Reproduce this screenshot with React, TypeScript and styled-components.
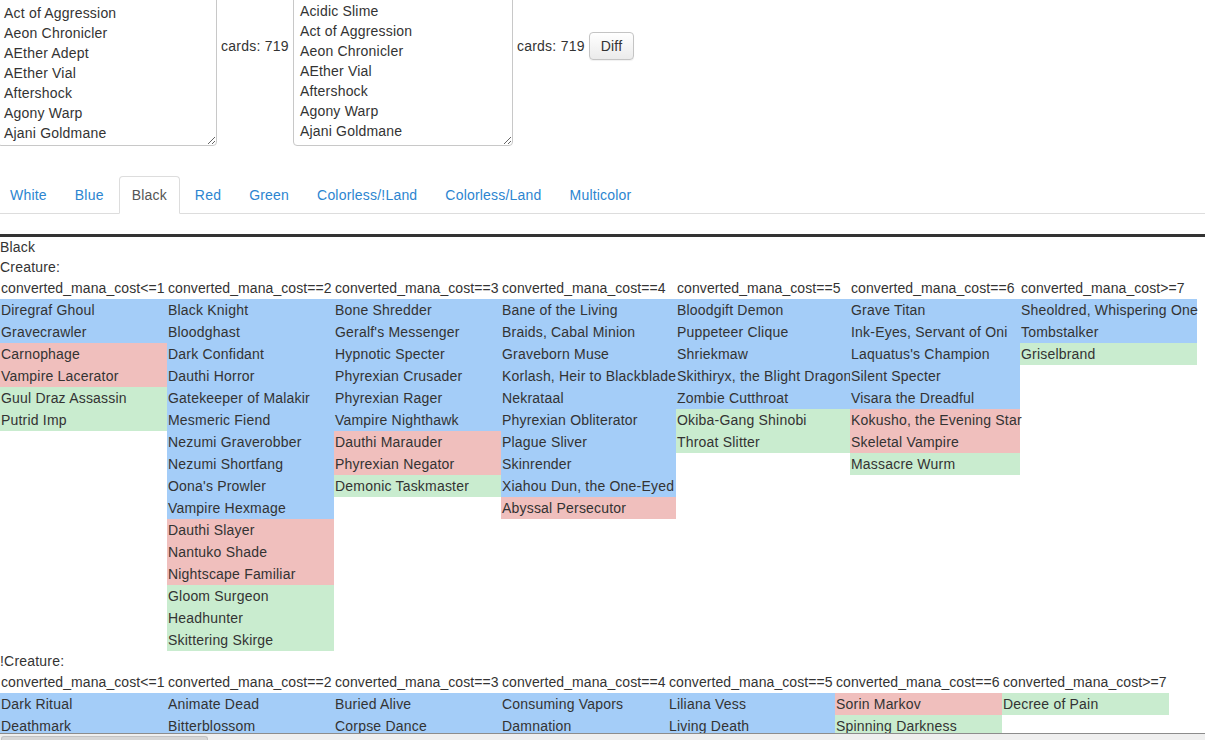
import React from 'react';
import styled, { createGlobalStyle } from 'styled-components';

const GlobalStyle = createGlobalStyle`
  html, body { margin: 0; padding: 0; overflow: hidden; background: #fff; }
  body {
    font-family: "Liberation Sans", Arial, Helvetica, sans-serif;
    font-size: 14px;
    line-height: 20px;
    color: #333;
    letter-spacing: 0.2px;
  }
`;

type Tone = 'b' | 'r' | 'g';

const toneBg: Record<Tone, string> = {
  b: '#a4cdf8',
  r: '#f0bfbd',
  g: '#c9eccf',
};

const Page = styled.div`
  width: 1205px;
`;

const TopRow = styled.div`
  display: flex;
  align-items: center;
  gap: 4px;
  height: 201px;
  margin: -55px 0 0 -3px;
`;

const CardArea = styled.textarea<{ $padTop: number }>`
  width: 220px;
  height: 201px;
  box-sizing: border-box;
  border: 1px solid #c8c8c8;
  border-radius: 4px;
  padding: ${(p) => p.$padTop}px 6px 0;
  font-family: inherit;
  font-size: 14px;
  line-height: 20px;
  letter-spacing: 0.2px;
  color: #333;
  background: #fff;
  resize: both;
  overflow: hidden;
  outline: none;
  flex: none;
`;

const CardsLabel = styled.span`
  white-space: nowrap;
  letter-spacing: 0.25px;
`;

const DiffButton = styled.button`
  font-family: inherit;
  font-size: 14px;
  line-height: 20px;
  letter-spacing: 0.2px;
  padding: 3px 11px;
  border: 1px solid #c4c4c4;
  border-radius: 4px;
  background: linear-gradient(#ffffff, #ebebeb);
  color: #333;
  box-shadow: 0 1px 1px rgba(0, 0, 0, 0.06);
`;

const Nav = styled.ul`
  display: flex;
  list-style: none;
  margin: 30px 0 0 -3px;
  padding: 0;
  border-bottom: 1px solid #ddd;
`;

const NavItem = styled.li`
  margin: 0 2px -1px 0;
`;

const NavLink = styled.a<{ $active?: boolean }>`
  display: block;
  padding: 8px 12px;
  line-height: 20px;
  border: 1px solid ${(p) => (p.$active ? '#ddd' : 'transparent')};
  border-bottom-color: transparent;
  border-radius: 4px 4px 0 0;
  background: ${(p) => (p.$active ? '#fff' : 'transparent')};
  color: ${(p) => (p.$active ? '#555' : '#2c85d0')};
  text-decoration: none;
  cursor: pointer;
`;

const Rule = styled.div`
  height: 3px;
  background: #333;
  margin-top: 20px;
`;

const Caption = styled.div`
  line-height: 20px;
`;

const Board = styled.div<{ $cols: string }>`
  display: grid;
  grid-template-columns: ${(p) => p.$cols};
  align-items: start;
`;

const HeadCell = styled.div`
  line-height: 22px;
  padding-left: 1px;
  white-space: nowrap;
  letter-spacing: 0.08px;
`;

const Column = styled.div`
  display: flex;
  flex-direction: column;
`;

const Card = styled.div<{ $tone: Tone }>`
  height: 22px;
  line-height: 22px;
  padding-left: 1px;
  white-space: nowrap;
  background: ${(p) => toneBg[p.$tone]};
`;

const ScrollTrack = styled.div`
  position: fixed;
  left: 0;
  right: 0;
  bottom: 0;
  height: 6px;
  border-top: 1px solid #8c8c8c;
  background: #efefef;
  display: flex;
  align-items: flex-end;
`;

const ScrollThumb = styled.div`
  width: 205px;
  height: 3px;
  margin-left: 1px;
  background: #d6d6d6;
  border: 1px solid #c2c2c2;
  border-bottom: none;
  border-radius: 3px 3px 0 0;
`;

const leftCards = [
  'Act of Aggression',
  'Aeon Chronicler',
  'AEther Adept',
  'AEther Vial',
  'Aftershock',
  'Agony Warp',
  'Ajani Goldmane',
];

const rightCards = [
  'Acidic Slime',
  'Act of Aggression',
  'Aeon Chronicler',
  'AEther Vial',
  'Aftershock',
  'Agony Warp',
  'Ajani Goldmane',
];

const tabs = ['White', 'Blue', 'Black', 'Red', 'Green', 'Colorless/!Land', 'Colorless/Land', 'Multicolor'];

const heads = [
  'converted_mana_cost<=1',
  'converted_mana_cost==2',
  'converted_mana_cost==3',
  'converted_mana_cost==4',
  'converted_mana_cost==5',
  'converted_mana_cost==6',
  'converted_mana_cost>=7',
];

type Entry = [string, Tone];

const creatures: Entry[][] = [
  [
    ['Diregraf Ghoul', 'b'],
    ['Gravecrawler', 'b'],
    ['Carnophage', 'r'],
    ['Vampire Lacerator', 'r'],
    ['Guul Draz Assassin', 'g'],
    ['Putrid Imp', 'g'],
  ],
  [
    ['Black Knight', 'b'],
    ['Bloodghast', 'b'],
    ['Dark Confidant', 'b'],
    ['Dauthi Horror', 'b'],
    ['Gatekeeper of Malakir', 'b'],
    ['Mesmeric Fiend', 'b'],
    ['Nezumi Graverobber', 'b'],
    ['Nezumi Shortfang', 'b'],
    ["Oona's Prowler", 'b'],
    ['Vampire Hexmage', 'b'],
    ['Dauthi Slayer', 'r'],
    ['Nantuko Shade', 'r'],
    ['Nightscape Familiar', 'r'],
    ['Gloom Surgeon', 'g'],
    ['Headhunter', 'g'],
    ['Skittering Skirge', 'g'],
  ],
  [
    ['Bone Shredder', 'b'],
    ["Geralf's Messenger", 'b'],
    ['Hypnotic Specter', 'b'],
    ['Phyrexian Crusader', 'b'],
    ['Phyrexian Rager', 'b'],
    ['Vampire Nighthawk', 'b'],
    ['Dauthi Marauder', 'r'],
    ['Phyrexian Negator', 'r'],
    ['Demonic Taskmaster', 'g'],
  ],
  [
    ['Bane of the Living', 'b'],
    ['Braids, Cabal Minion', 'b'],
    ['Graveborn Muse', 'b'],
    ['Korlash, Heir to Blackblade', 'b'],
    ['Nekrataal', 'b'],
    ['Phyrexian Obliterator', 'b'],
    ['Plague Sliver', 'b'],
    ['Skinrender', 'b'],
    ['Xiahou Dun, the One-Eyed', 'b'],
    ['Abyssal Persecutor', 'r'],
  ],
  [
    ['Bloodgift Demon', 'b'],
    ['Puppeteer Clique', 'b'],
    ['Shriekmaw', 'b'],
    ['Skithiryx, the Blight Dragon', 'b'],
    ['Zombie Cutthroat', 'b'],
    ['Okiba-Gang Shinobi', 'g'],
    ['Throat Slitter', 'g'],
  ],
  [
    ['Grave Titan', 'b'],
    ['Ink-Eyes, Servant of Oni', 'b'],
    ["Laquatus's Champion", 'b'],
    ['Silent Specter', 'b'],
    ['Visara the Dreadful', 'b'],
    ['Kokusho, the Evening Star', 'r'],
    ['Skeletal Vampire', 'r'],
    ['Massacre Wurm', 'g'],
  ],
  [
    ['Sheoldred, Whispering One', 'b'],
    ['Tombstalker', 'b'],
    ['Griselbrand', 'g'],
  ],
];

const others: Entry[][] = [
  [
    ['Dark Ritual', 'b'],
    ['Deathmark', 'b'],
  ],
  [
    ['Animate Dead', 'b'],
    ['Bitterblossom', 'b'],
  ],
  [
    ['Buried Alive', 'b'],
    ['Corpse Dance', 'b'],
  ],
  [
    ['Consuming Vapors', 'b'],
    ['Damnation', 'b'],
  ],
  [
    ['Liliana Vess', 'b'],
    ['Living Death', 'b'],
  ],
  [
    ['Sorin Markov', 'r'],
    ['Spinning Darkness', 'g'],
  ],
  [['Decree of Pain', 'g']],
];

function CardBoard({ widths, columns }: { widths: number[]; columns: Entry[][] }) {
  return (
    <Board $cols={widths.map((w) => `${w}px`).join(' ')}>
      {heads.map((h) => (
        <HeadCell key={h}>{h}</HeadCell>
      ))}
      {columns.map((col, i) => (
        <Column key={i}>
          {col.map(([name, tone]) => (
            <Card key={name} $tone={tone}>
              {name}
            </Card>
          ))}
        </Column>
      ))}
    </Board>
  );
}

export default function App() {
  return (
    <Page>
      <GlobalStyle />
      <TopRow>
        <CardArea $padTop={57} readOnly defaultValue={leftCards.join('\n')} />
        <CardsLabel>cards: 719</CardsLabel>
        <CardArea $padTop={55} readOnly defaultValue={rightCards.join('\n')} />
        <CardsLabel>cards: 719</CardsLabel>
        <DiffButton>Diff</DiffButton>
      </TopRow>
      <Nav>
        {tabs.map((t) => (
          <NavItem key={t}>
            <NavLink $active={t === 'Black'}>{t}</NavLink>
          </NavItem>
        ))}
      </Nav>
      <Rule />
      <Caption>Black</Caption>
      <Caption>Creature:</Caption>
      <CardBoard widths={[167, 167, 167, 175, 174, 170, 177]} columns={creatures} />
      <Caption>!Creature:</Caption>
      <CardBoard widths={[167, 167, 167, 167, 167, 167, 167]} columns={others} />
      <ScrollTrack>
        <ScrollThumb />
      </ScrollTrack>
    </Page>
  );
}
